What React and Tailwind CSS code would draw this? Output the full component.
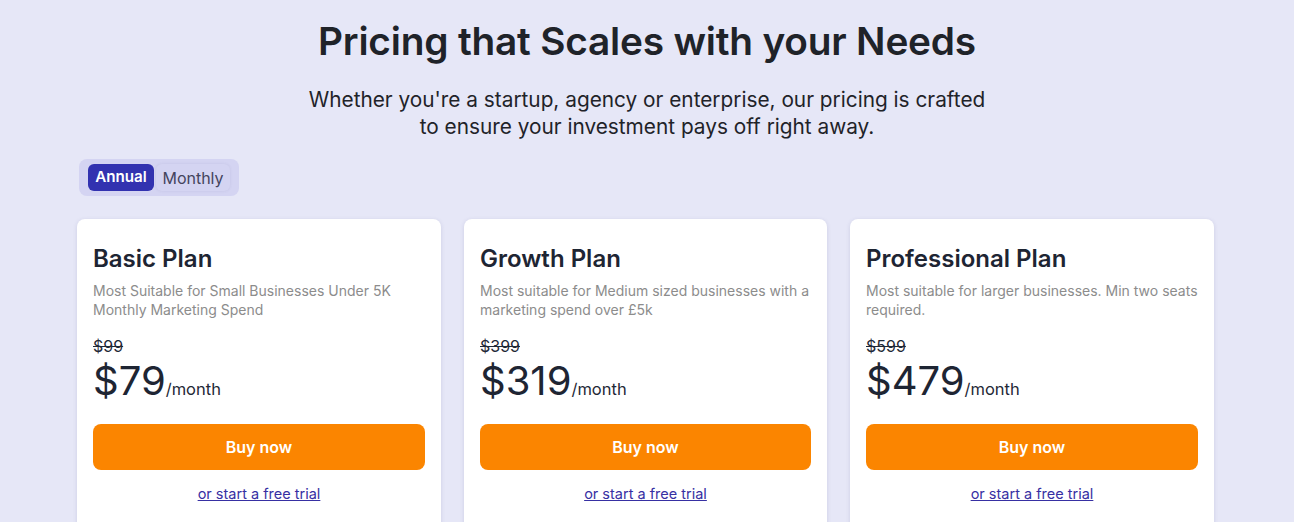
import React from "react";

const plans = [
  {
    name: "Basic Plan",
    desc: "Most Suitable for Small Businesses Under 5K Monthly Marketing Spend",
    old: "$99",
    price: "$79",
  },
  {
    name: "Growth Plan",
    desc: "Most suitable for Medium sized businesses with a marketing spend over £5k",
    old: "$399",
    price: "$319",
  },
  {
    name: "Professional Plan",
    desc: "Most suitable for larger businesses. Min two seats required.",
    old: "$599",
    price: "$479",
  },
];

export default function App() {
  return (
    <div
      className="min-h-[522px] bg-[#e6e7f7] text-[#1f2937] overflow-hidden"
      style={{ fontFamily: "Inter, 'Noto Sans', sans-serif" }}
    >
      <div className="w-[1140px] mx-auto pt-[17px]">
        <h1 className="text-center text-[38.8px] leading-[48px] font-semibold text-[#1f2329] tracking-[-0.2px]">
          Pricing that Scales with your Needs
        </h1>
        <p className="mx-auto mt-[21px] max-w-[690px] text-center text-[20.8px] leading-[27px] text-[#1f2329]">
          Whether you're a startup, agency or enterprise, our pricing is crafted to ensure your investment pays off right away.
        </p>
        <div className="mt-[19px] ml-[2px] inline-flex items-center gap-[2px] rounded-lg bg-[#d4d4f2] px-[9px] py-[5px]">
          <button className="w-[66px] rounded-md bg-[#3232b0] h-[27px] text-[15.2px] font-semibold text-white">
            Annual
          </button>
          <button className="w-[74px] rounded-md bg-[#d4d4f2] h-[27px] text-[16px] text-[#44445e] shadow-[0_0_3px_rgba(80,80,140,0.12)]">
            Monthly
          </button>
        </div>
        <div className="mt-[23px] grid w-[1137px] grid-cols-[364px_363px_364px] gap-[23px]">
          {plans.map((p) => (
            <div
              key={p.name}
              className="h-[330px] rounded-lg bg-white px-4 pt-6 shadow-[0_1px_4px_rgba(60,60,120,0.15)]"
            >
              <h2 className="text-2xl leading-8 font-semibold text-[#1e2533]">{p.name}</h2>
              <p className="mt-[6px] text-sm leading-[19px] text-[#8c8c8c]">{p.desc}</p>
              <div className="mt-[17px] text-base leading-5 line-through text-[#1f2937]">{p.old}</div>
              <div className="flex items-baseline">
                <span className="text-[40px] leading-[50px] text-[#1e2533]">{p.price}</span>
                <span className="text-[16.5px] text-[#1f2937]">/month</span>
              </div>
              <button className="mt-[18px] w-full h-[46px] rounded-lg bg-[#fb8500] text-base font-semibold text-white">
                Buy now
              </button>
              <div className="mt-[11px] text-center">
                <a href="#" className="text-[14.5px] leading-5 underline text-[#3730a3]">
                  or start a free trial
                </a>
              </div>
            </div>
          ))}
        </div>
      </div>
    </div>
  );
}
